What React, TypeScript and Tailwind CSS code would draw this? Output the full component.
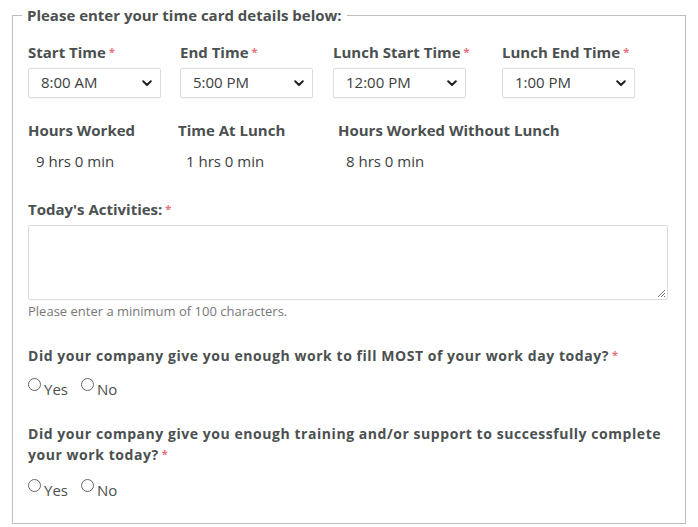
import React from "react";

const font = { fontFamily: '"Open Sans", "Liberation Sans", sans-serif' };

function Req() {
  return <span className="text-[#e8707a] text-[11px] ml-[3px] relative -top-[2px] tracking-normal">*</span>;
}

function Sel({ value }: { value: string }) {
  return (
    <div className="relative w-[133px] h-[30px] border border-[#dcdcdc] rounded-[2px] bg-white flex items-center pl-[12px] text-[15px] text-[#3c4040] shadow-[0_1px_1px_rgba(0,0,0,0.04)]">
      <span>{value}</span>
      <svg className="absolute right-[8px] top-[11px]" width="10" height="7" viewBox="0 0 10 7">
        <path d="M1.2 1.2 L5 5 L8.8 1.2" fill="none" stroke="#222" strokeWidth="2" strokeLinecap="round" strokeLinejoin="round" />
      </svg>
    </div>
  );
}

function Radio({ label }: { label: string }) {
  return (
    <span className="inline-flex items-start mr-[13px]">
      <span className="w-[13px] h-[13px] rounded-full border border-[#666] mt-[1px]" />
      <span className="ml-[3px] mt-[2px] text-[15px] leading-[20px] text-[#4b5050]">{label}</span>
    </span>
  );
}

export default function App() {
  return (
    <div className="w-[698px] h-[527px] bg-white text-[#4b5050]" style={font}>
      <fieldset className="ml-[12px] mt-[4px] w-[674px] h-[520px] border border-[#bdbdbd] px-[15px] pt-[0px]">
        <legend className="px-[5px] text-[15px] font-bold text-[#4b5050] -ml-[6px]">Please enter your time card details below:</legend>
        <div className="flex mt-[15px]">
          {[
            ["Start Time", "8:00 AM", "w-[152px]"],
            ["End Time", "5:00 PM", "w-[153px]"],
            ["Lunch Start Time", "12:00 PM", "w-[169px]"],
            ["Lunch End Time", "1:00 PM", "w-[150px]"],
          ].map(([l, v, w]) => (
            <div key={l} className={w}>
              <div className="text-[15px] font-bold leading-[20px] whitespace-nowrap">
                {l}
                <Req />
              </div>
              <div className="mt-[4px]">
                <Sel value={v} />
              </div>
            </div>
          ))}
        </div>
        <div className="flex mt-[22px]">
          {[
            ["Hours Worked", "9 hrs 0 min", "w-[150px]"],
            ["Time At Lunch", "1 hrs 0 min", "w-[160px]"],
            ["Hours Worked Without Lunch", "8 hrs 0 min", "w-[300px]"],
          ].map(([l, v, w]) => (
            <div key={l} className={w}>
              <div className="text-[15px] font-bold leading-[20px] whitespace-nowrap">{l}</div>
              <div className="mt-[11px] pl-[8px] text-[15px] leading-[20px] text-[#3c4040]">{v}</div>
            </div>
          ))}
        </div>
        <div className="mt-[28px] text-[15px] font-bold leading-[20px]">
          Today's Activities:
          <Req />
        </div>
        <div className="mt-[4px] w-[640px] h-[75px] border border-[#dcdcdc] rounded-[2px] relative">
          <svg className="absolute right-[1px] bottom-[1px]" width="9" height="9" viewBox="0 0 9 9">
            <path d="M8 1 L1 8 M8 4 L4 8 M8 7 L7 8" stroke="#777" strokeWidth="1" />
          </svg>
        </div>
        <div className="mt-[3px] text-[13px] leading-[16px] text-[#777]">Please enter a minimum of 100 characters.</div>
        <div className="mt-[26px] text-[14px] font-bold leading-[21px] tracking-[0.55px]">
          Did your company give you enough work to fill MOST of your work day today?
          <Req />
        </div>
        <div className="mt-[10px] flex">
          <Radio label="Yes" />
          <Radio label="No" />
        </div>
        <div className="mt-[24px] text-[14px] font-bold leading-[21px] tracking-[0.55px]">
          Did your company give you enough training and/or support to successfully complete your work today?
          <Req />
        </div>
        <div className="mt-[12px] flex">
          <Radio label="Yes" />
          <Radio label="No" />
        </div>
      </fieldset>
    </div>
  );
}
